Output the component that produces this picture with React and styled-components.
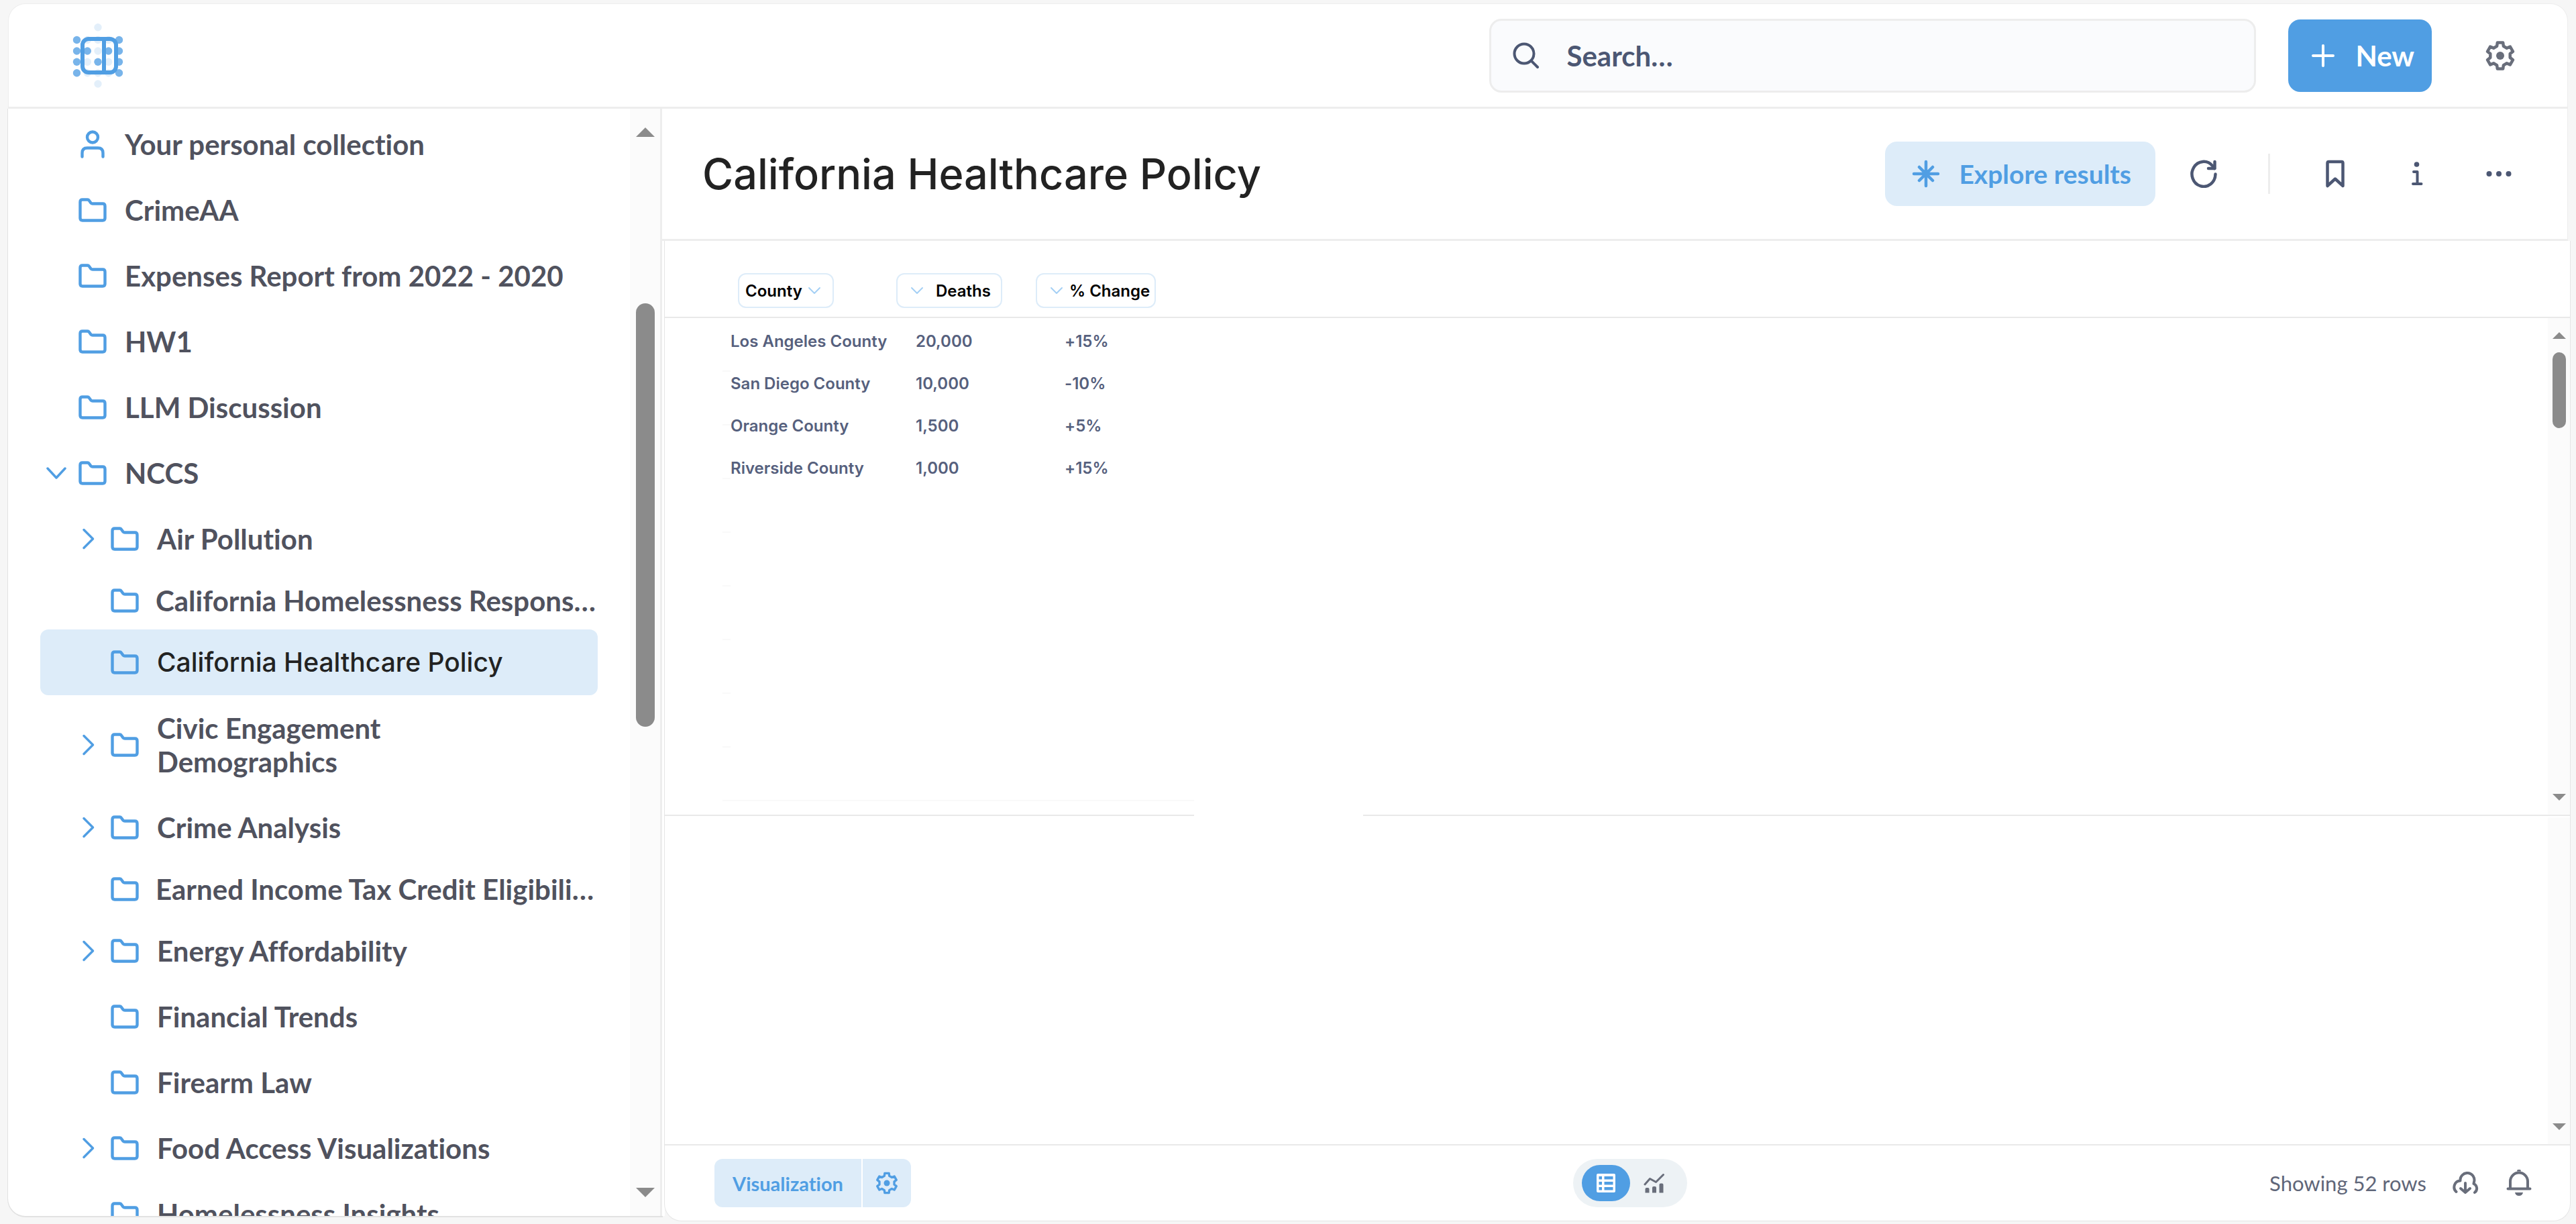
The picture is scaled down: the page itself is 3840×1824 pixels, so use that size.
import React from "react";
import styled, { createGlobalStyle, css } from "styled-components";

const color = {
  page: "#f6f6f6",
  line: "#ededed",
  brand: "#509ee3",
  brandLight: "#ddecf9",
  text: "#50525e",
  slate: "#4c5773",
  icon: "#696e7b",
  track: "#fbfbfb",
  thumb: "#8b8b8b",
};

const lato = `Lato, "Open Sans", sans-serif`;
const inter = `Inter, Roboto, sans-serif`;

const GlobalStyle = createGlobalStyle`
  *, *::before, *::after { box-sizing: border-box; }
  body {
    margin: 0;
    background: ${color.page};
    font-family: ${lato};
    font-variant-ligatures: none;
  }
  button, input { font: inherit; font-variant-ligatures: none; }
  svg { display: block; flex: none; }
`;

/* ---------- shell ---------- */

const Shell = styled.div`
  display: flex;
  flex-direction: column;
  height: 100vh;
  padding: 5px 0 4px;
  overflow: hidden;
`;

const TopBar = styled.header`
  display: flex;
  align-items: center;
  flex: none;
  height: 157px;
  margin: 0 12px;
  padding: 0 70px 0 80px;
  background: #fff;
  border: 1px solid ${color.line};
  border-bottom: 3px solid ${color.line};
  border-radius: 26px 26px 0 0;
`;

const HomeLink = styled.a`
  display: block;
  margin-right: auto;
`;

const SearchBox = styled.label`
  display: flex;
  align-items: center;
  gap: 40px;
  width: 1143px;
  height: 110px;
  padding: 0 32px;
  background: #fafbfd;
  border: 3px solid ${color.line};
  border-radius: 18px;
  color: ${color.slate};
`;

const SearchInput = styled.input`
  flex: 1;
  min-width: 0;
  padding: 0;
  border: 0;
  outline: 0;
  background: transparent;
  color: ${color.slate};
  font-size: 42px;
  font-weight: 700;
  &::placeholder { color: ${color.slate}; opacity: 1; }
`;

const NewButton = styled.button`
  display: flex;
  align-items: center;
  gap: 30px;
  height: 108px;
  margin: 0 72px 0 48px;
  padding: 0 26px 0 34px;
  border: 0;
  border-radius: 18px;
  background: ${color.brand};
  color: #fff;
  font-size: 42px;
  font-weight: 700;
`;

const IconButton = styled.button`
  display: flex;
  align-items: center;
  justify-content: center;
  width: ${(p) => p.$width || 60}px;
  height: 60px;
  padding: 0;
  border: 0;
  background: transparent;
  color: ${(p) => p.$color || color.slate};
`;

const Body = styled.div`
  display: flex;
  flex: 1;
  min-height: 0;
`;

/* ---------- sidebar ---------- */

const Sidebar = styled.aside`
  display: flex;
  flex: none;
  width: 975px;
  margin: 0 0 8px 12px;
  background: #fff;
  border-right: 3px solid ${color.line};
  border-bottom-left-radius: 26px;
  box-shadow: 4px 0 0 #fff, 0 1px 0 1px #e2e2e2;
`;

const Tree = styled.nav`
  flex: 1;
  min-width: 0;
  padding: 4px 48px 0;
  overflow: hidden;
`;

const TreeRow = styled.a`
  display: flex;
  align-items: center;
  padding: ${(p) => (p.$clipped ? 18 : 24)}px 0;
  padding-left: ${(p) => 4 + p.$level * 48}px;
  border-radius: 12px;
  color: ${color.text};
  font-size: 42px;
  font-weight: 700;
  line-height: 50px;
  text-decoration: none;
  white-space: pre;
  ${(p) =>
    p.$selected &&
    css`
      background: ${color.brandLight};
      color: #222;
      font-family: ${inter};
      font-size: 39px;
      font-weight: 500;
    `}
`;

const ChevronSlot = styled.span`
  display: flex;
  justify-content: center;
  width: 40px;
  color: ${color.brand};
`;

const FolderSlot = styled.span`
  display: flex;
  justify-content: center;
  width: 44px;
  margin: 0 ${(p) => (p.$clipped ? 24 : 26)}px 0 12px;
  color: ${color.brand};
`;

const ScrollTrack = styled.div`
  display: grid;
  justify-items: center;
  flex: none;
  width: ${(p) => p.$width}px;
  padding: ${(p) => p.$pad}px 0;
  background: ${color.track};
  grid-template-rows: auto ${(p) => p.$rows} auto;
`;

const PaneTrack = styled(ScrollTrack)`
  grid-column: 2;
  grid-row: 2;
`;

const Arrow = styled.span`
  width: 0;
  height: 0;
  border: solid transparent;
  border-width: 0 ${(p) => p.$half}px;
  ${(p) =>
    p.$down
      ? css`border-top: ${p.$tall}px solid ${color.thumb}; grid-row: 5;`
      : css`border-bottom: ${p.$tall}px solid ${color.thumb}; grid-row: 1;`}
`;

const Thumb = styled.span`
  grid-row: 3;
  width: ${(p) => p.$width}px;
  border-radius: 14px;
  background: ${color.thumb};
`;

/* ---------- main ---------- */

const Main = styled.main`
  display: flex;
  flex: 1;
  flex-direction: column;
  min-width: 0;
`;

const TitleBar = styled.div`
  display: flex;
  align-items: center;
  flex: none;
  height: 197px;
  margin-right: 12px;
  padding: 0 72px 0 60px;
  background: #fff;
  border-right: 1px solid ${color.line};
  border-bottom: 3px solid ${color.line};
`;

const Title = styled.h1`
  margin: 0 auto 0 0;
  color: #222;
  font-family: ${inter};
  font-size: 63px;
  font-weight: 500;
  line-height: 80px;
`;

const ExploreButton = styled.button`
  display: flex;
  align-items: center;
  gap: 28px;
  height: 96px;
  margin-right: 42px;
  padding: 0 36px 0 40px;
  border: 0;
  border-radius: 18px;
  background: ${color.brandLight};
  color: ${color.brand};
  font-size: 39px;
  font-weight: 700;
`;

const Divider = styled.span`
  width: 3px;
  height: 60px;
  margin: 0 67px 0 66px;
  background: ${color.line};
`;

const Panel = styled.section`
  display: flex;
  flex: 1;
  flex-direction: column;
  min-height: 0;
  margin: 0 8px 0 3px;
  background: #fff;
  border: 1px solid #e6e6e6;
  border-top: 0;
  border-radius: 0 0 26px 26px;
`;

const TablePane = styled.div`
  display: grid;
  flex: none;
  grid-template-columns: 1fr 33px;
  grid-template-rows: 115px auto;
`;

const DataTable = styled.table`
  grid-column: 1 / 3;
  grid-row: 1 / 3;
  align-self: start;
  width: 100%;
  border-collapse: separate;
  border-spacing: 0;
  table-layout: fixed;
  font-family: ${inter};
  font-size: 24px;
  tbody::before { content: ""; display: table-row; height: 3px; }
`;

const HeadCell = styled.th`
  width: ${(p) => p.$width}px;
  height: 115px;
  padding: 48px 0 13px ${(p) => p.$inset || 0}px;
  border-bottom: 2px solid #e9e9e9;
  text-align: left;
  vertical-align: top;
`;

const ColumnPill = styled.button`
  display: flex;
  align-items: center;
  gap: ${(p) => p.$gap}px;
  height: 52px;
  padding: 0 ${(p) => p.$right}px 0 ${(p) => p.$left}px;
  border: 2px solid ${color.brandLight};
  border-radius: 12px;
  background: #fff;
  color: #000;
  font-family: ${inter};
  font-size: 24px;
  font-weight: 600;
  svg { color: #a5d0f5; }
`;

const Cell = styled.td`
  height: 63px;
  padding: 0 0 0 ${(p) => p.$inset}px;
  color: #56607d;
  font-weight: 600;
  white-space: nowrap;
`;

const Guides = styled.div`
  grid-column: 1;
  grid-row: 2;
  padding: 0 0 20px 86px;
`;

const GuideRow = styled.div`
  width: ${(p) => p.$width}px;
  height: 80px;
  border-bottom: 2px solid #f9f9f9;
`;

const SplitLine = styled.div`
  display: flex;
  gap: 252px;
  flex: none;
  height: 2px;
  &::before { content: ""; width: 789px; background: #e9e9e9; }
  &::after { content: ""; flex: 1; background: #e9e9e9; }
`;

const LowerPane = styled.div`
  display: flex;
  justify-content: flex-end;
  flex: 1;
  padding-top: 2px;
`;

const Footer = styled.footer`
  display: grid;
  grid-template-columns: 1fr auto 1fr;
  align-items: center;
  flex: none;
  height: 114px;
  padding: 0 36px 0 74px;
  border-top: 2px solid #e9e9e9;
`;

const SplitButton = styled.div`
  display: flex;
  gap: 2px;
  justify-self: start;
  height: 72px;
  border-radius: 12px;
  overflow: hidden;
`;

const SplitPart = styled.button`
  display: flex;
  align-items: center;
  padding: 0 ${(p) => p.$pad}px;
  border: 0;
  background: ${color.brandLight};
  color: ${color.brand};
  font-size: 29px;
  font-weight: 700;
`;

const ViewToggle = styled.div`
  display: flex;
  align-items: center;
  height: 72px;
  width: 170px;
  padding: 0 13px;
  border-radius: 36px;
  background: #edf2f5;
`;

const ToggleOption = styled.button`
  display: flex;
  align-items: center;
  justify-content: center;
  width: 72px;
  height: 54px;
  padding: 0;
  border: 0;
  border-radius: 27px;
  background: ${(p) => (p.$active ? color.brand : "transparent")};
  color: ${(p) => (p.$active ? "#fff" : color.icon)};
`;

const Status = styled.div`
  display: flex;
  align-items: center;
  justify-self: end;
  color: ${color.icon};
  font-size: 31px;
`;

const RowCount = styled.span`
  margin-right: 18px;
  color: #5f6679;
`;

/* ---------- icons ---------- */

const stroke = {
  fill: "none",
  stroke: "currentColor",
  strokeLinecap: "round",
  strokeLinejoin: "round",
};

const gearPath = (() => {
  const points = [];
  for (let i = 0; i < 6; i += 1) {
    const mid = -90 + i * 60;
    [[15, -19], [20, -12], [20, 12], [15, 19]].forEach(([r, offset]) => {
      const a = ((mid + offset) * Math.PI) / 180;
      points.push(`${(24 + r * Math.cos(a)).toFixed(2)} ${(24 + r * Math.sin(a)).toFixed(2)}`);
    });
  }
  return `M${points.join("L")}Z`;
})();

const GearIcon = ({ size = 48 }) => (
  <svg width={size} height={size} viewBox="0 0 48 48" {...stroke} strokeWidth="4.5">
    <path d={gearPath} />
    <circle cx="24" cy="24" r="6" fill="currentColor" stroke="none" />
  </svg>
);

const FolderIcon = () => (
  <svg width="42" height="36" viewBox="0 0 42 36" {...stroke} strokeWidth="4.4">
    <path d="M2.500 6Q2.500 2.500 6 2.500H13.500Q15 2.500 16 4L18.500 7.500Q19.500 8.500 21 8.500H36Q39.500 8.500 39.500 12V30Q39.500 33.500 36 33.500H6Q2.500 33.500 2.500 30Z" />
  </svg>
);

const PersonIcon = () => (
  <svg width="38" height="42" viewBox="0 0 38 42" {...stroke} strokeWidth="4.4">
    <circle cx="19" cy="10.500" r="8" />
    <path d="M3.500 39.500V34Q3.500 26.500 11 26.500H27Q34.500 26.500 34.500 34V39.500" />
  </svg>
);

const ChevronDown = ({ width = 30, height = 18, weight = 3.5 }) => (
  <svg width={width} height={height} viewBox={`0 0 ${width} ${height}`} {...stroke} strokeWidth={weight}>
    <path d={`M2 2L${width / 2} ${height - 2}L${width - 2} 2`} />
  </svg>
);

const ChevronRight = () => (
  <svg width="20" height="32" viewBox="0 0 20 32" {...stroke} strokeWidth="3.5">
    <path d="M3 2.500L16.500 16L3 29.500" />
  </svg>
);

const dotColumns = [21.5, 37.3, 53, 68.7, 84.5];
const dotOffsets = [10.7, 29.5, 46, 62.3, 78.7, 95];
const dotRows = ["..o..", "xooox", "xxoxx", "xoxox", "xooox", "..o.."];

const LogoIcon = () => (
  <svg width="106" height="106" viewBox="0 0 106 106">
    {dotRows.map((row, y) =>
      [...row].map((dot, x) =>
        dot === "." ? null : (
          <circle
            key={`${x}-${y}`}
            cx={dotColumns[x]}
            cy={dotOffsets[y]}
            r="5.7"
            fill={dot === "x" ? "#78b4ea" : "#e3effa"}
          />
        )
      )
    )}
    <rect x="30" y="28" width="50" height="50" rx="9" fill="none" stroke={color.brand} strokeWidth="6" />
    <path d="M62 28V78" stroke={color.brand} strokeWidth="6" />
  </svg>
);

const SearchIcon = () => (
  <svg width="40" height="40" viewBox="0 0 40 40" {...stroke} strokeWidth="4">
    <circle cx="17" cy="17" r="14.500" />
    <path d="M28 28L37 37" />
  </svg>
);

const PlusIcon = () => (
  <svg width="36" height="36" viewBox="0 0 36 36" {...stroke} strokeWidth="4">
    <path d="M18 3V33M3 18H33" />
  </svg>
);

const SparkIcon = () => (
  <svg width="42" height="42" viewBox="0 0 42 42" {...stroke} strokeWidth="4.5">
    <path d="M21 3V39M3 21H39M11 11L31 31M31 11L11 31" />
  </svg>
);

const RefreshIcon = () => (
  <svg width="42" height="42" viewBox="0 0 42 42" {...stroke} strokeWidth="4.500">
    <path d="M38.500 21.500A17.500 18.500 0 1 1 34 9L37 13" />
    <path d="M37.500 3V13H28" />
  </svg>
);

const BookmarkIcon = () => (
  <svg width="30" height="42" viewBox="0 0 30 42" {...stroke} strokeWidth="4.500">
    <path d="M3.500 5Q3.500 3 5.500 3H24.500Q26.500 3 26.500 5V39L15 28.500L3.500 39Z" />
  </svg>
);

const InfoIcon = () => (
  <svg width="18" height="36" viewBox="0 0 18 36" {...stroke} strokeWidth="4">
    <circle cx="8.500" cy="4" r="3.800" fill="currentColor" stroke="none" />
    <path d="M4 15H9.500V32.500M3 33H15.500" />
  </svg>
);

const MoreIcon = () => (
  <svg width="40" height="10" viewBox="0 0 40 10" fill="currentColor">
    <circle cx="5.500" cy="5" r="4" />
    <circle cx="20" cy="5" r="4" />
    <circle cx="34.500" cy="5" r="4" />
  </svg>
);

const TableIcon = () => (
  <svg width="28" height="28" viewBox="0 0 28 28" fill="currentColor" fillRule="evenodd">
    <path d="M2 0H26Q28 0 28 2V26Q28 28 26 28H2Q0 28 0 26V2Q0 0 2 0ZM3.500 4V8.500H8V4ZM11.500 4V8.500H24.500V4ZM3.500 12V16.500H8V12ZM11.500 12V16.500H24.500V12ZM3.500 20V24.500H8V20ZM11.500 20V24.500H24.500V20Z" />
  </svg>
);

const ChartIcon = () => (
  <svg width="32" height="30" viewBox="0 0 32 30" {...stroke} strokeWidth="3">
    <path d="M2 17L9.500 8.500L18.500 13.500L29.500 2.500" />
    <path
      d="M2.500 29.500V24Q2.500 22 4.500 22H6.500Q8.500 22 8.500 24V29.500ZM13 29.500V22Q13 20 15 20H17Q19 20 19 22V29.500ZM23.500 29.500V17.500Q23.500 15.500 25.500 15.500H27.500Q29.500 15.500 29.500 17.500V29.500Z"
      fill="currentColor"
      stroke="none"
    />
  </svg>
);

const CloudIcon = () => (
  <svg width="42" height="34" viewBox="0 0 42 34" {...stroke} strokeWidth="4">
    <path d="M7.500 30A9.500 9.500 0 0 1 13.500 13.500A10.500 10.500 0 1 1 34 15.500L33.500 18A7.500 7.500 0 0 1 35 31" />
    <path d="M21 17V30.500M14 25L21 31L28 25" />
  </svg>
);

const BellIcon = () => (
  <svg width="38" height="40" viewBox="0 0 38 40" {...stroke} strokeWidth="4">
    <path d="M6 28V17.500A13 13 0 0 1 32 17.500V28M2.500 28.500H35.500" />
    <path d="M16 2.500A3 3 0 0 1 22 2.500ZM13 34H25Q24 39 19 39Q14 39 13 34Z" fill="currentColor" stroke="none" />
  </svg>
);

/* ---------- data ---------- */

const collections = [
  { label: "Your personal collection", level: 0, person: true },
  { label: "CrimeAA", level: 0 },
  { label: "Expenses Report from 2022 - 2020", level: 0 },
  { label: "HW1", level: 0 },
  { label: "LLM Discussion", level: 0 },
  { label: "NCCS", level: 0, chevron: "down" },
  { label: "Air Pollution", level: 1, chevron: "right" },
  { label: "California Homelessness Respons…", level: 1, clipped: true },
  { label: "California Healthcare Policy", level: 1, selected: true },
  { label: "Civic Engagement\nDemographics", level: 1, chevron: "right" },
  { label: "Crime Analysis", level: 1, chevron: "right" },
  { label: "Earned Income Tax Credit Eligibili…", level: 1, clipped: true },
  { label: "Energy Affordability", level: 1, chevron: "right" },
  { label: "Financial Trends", level: 1 },
  { label: "Firearm Law", level: 1 },
  { label: "Food Access Visualizations", level: 1, chevron: "right" },
  { label: "Homelessness Insights", level: 1 },
];

const counties = [
  ["Los Angeles County", "20,000", "+15%"],
  ["San Diego County", "10,000", "-10%"],
  ["Orange County", "1,500", "+5%"],
  ["Riverside County", "1,000", "+15%"],
];

const guideWidths = [12, 12, 12, 12, 12, 12, 12, 12, 703];

const pillChevron = <ChevronDown width={20} height={12} weight={2} />;

export default function App() {
  return (
    <Shell>
      <GlobalStyle />
      <TopBar>
        <HomeLink href="#home" aria-label="Home"><LogoIcon /></HomeLink>
        <SearchBox>
          <SearchIcon />
          <SearchInput type="text" aria-label="Search" placeholder="Search…" />
        </SearchBox>
        <NewButton type="button"><PlusIcon />New</NewButton>
        <IconButton type="button" aria-label="Settings" $color={color.icon}><GearIcon /></IconButton>
      </TopBar>

      <Body>
        <Sidebar>
          <Tree aria-label="Collections">
            {collections.map((item) => (
              <TreeRow
                key={item.label}
                href="#collection"
                $level={item.level}
                $clipped={item.clipped}
                $selected={item.selected}
                aria-current={item.selected ? "page" : undefined}
              >
                <ChevronSlot>
                  {item.chevron === "down" && <ChevronDown />}
                  {item.chevron === "right" && <ChevronRight />}
                </ChevronSlot>
                <FolderSlot $clipped={item.clipped}>{item.person ? <PersonIcon /> : <FolderIcon />}</FolderSlot>
                <span>{item.label}</span>
              </TreeRow>
            ))}
          </Tree>
          <ScrollTrack $width={45} $pad={28} $rows="248fr 631fr 687fr" aria-hidden="true">
            <Arrow $half={14} $tall={14} />
            <Thumb $width={28} />
            <Arrow $half={14} $tall={14} $down />
          </ScrollTrack>
        </Sidebar>

        <Main>
          <TitleBar>
            <Title>California Healthcare Policy</Title>
            <ExploreButton type="button"><SparkIcon />Explore results</ExploreButton>
            <IconButton type="button" aria-label="Refresh"><RefreshIcon /></IconButton>
            <Divider />
            <IconButton type="button" aria-label="Bookmark"><BookmarkIcon /></IconButton>
            <IconButton type="button" aria-label="Info" $width={184}><InfoIcon /></IconButton>
            <IconButton type="button" aria-label="More"><MoreIcon /></IconButton>
          </TitleBar>

          <Panel>
            <TablePane>
              <Guides aria-hidden="true">
                {guideWidths.map((width, i) => <GuideRow key={i} $width={width} />)}
              </Guides>
              <DataTable>
                <thead>
                  <tr>
                    <HeadCell $width={345} $inset={109}>
                      <ColumnPill type="button" $left={9} $right={17} $gap={8}>County{pillChevron}</ColumnPill>
                    </HeadCell>
                    <HeadCell $width={208}>
                      <ColumnPill type="button" $left={19} $right={15} $gap={18}>{pillChevron}Deaths</ColumnPill>
                    </HeadCell>
                    <HeadCell>
                      <ColumnPill type="button" $left={19} $right={7} $gap={9}>{pillChevron}% Change</ColumnPill>
                    </HeadCell>
                  </tr>
                </thead>
                <tbody>
                  {counties.map(([county, deaths, change]) => (
                    <tr key={county}>
                      <Cell $inset={98}>{county}</Cell>
                      <Cell $inset={29}>{deaths}</Cell>
                      <Cell $inset={43}>{change}</Cell>
                    </tr>
                  ))}
                </tbody>
              </DataTable>
              <PaneTrack $width={33} $pad={21} $rows="20fr 113fr 544fr" aria-hidden="true">
                <Arrow $half={10} $tall={10} />
                <Thumb $width={20} />
                <Arrow $half={10} $tall={10} $down />
              </PaneTrack>
            </TablePane>
            <SplitLine />
            <LowerPane>
              <ScrollTrack $width={33} $pad={21} $rows="1fr 0 0" aria-hidden="true">
                <Arrow $half={10} $tall={10} $down />
              </ScrollTrack>
            </LowerPane>
            <Footer>
              <SplitButton>
                <SplitPart type="button" $pad={27}>Visualization</SplitPart>
                <SplitPart type="button" $pad={18} aria-label="Visualization settings"><GearIcon size={36} /></SplitPart>
              </SplitButton>
              <ViewToggle>
                <ToggleOption type="button" $active aria-label="Table view"><TableIcon /></ToggleOption>
                <ToggleOption type="button" aria-label="Chart view"><ChartIcon /></ToggleOption>
              </ViewToggle>
              <Status>
                <RowCount>Showing 52 rows</RowCount>
                <IconButton type="button" aria-label="Download" $width={80} $color={color.icon}><CloudIcon /></IconButton>
                <IconButton type="button" aria-label="Alerts" $width={80} $color={color.icon}><BellIcon /></IconButton>
              </Status>
            </Footer>
          </Panel>
        </Main>
      </Body>
    </Shell>
  );
}
